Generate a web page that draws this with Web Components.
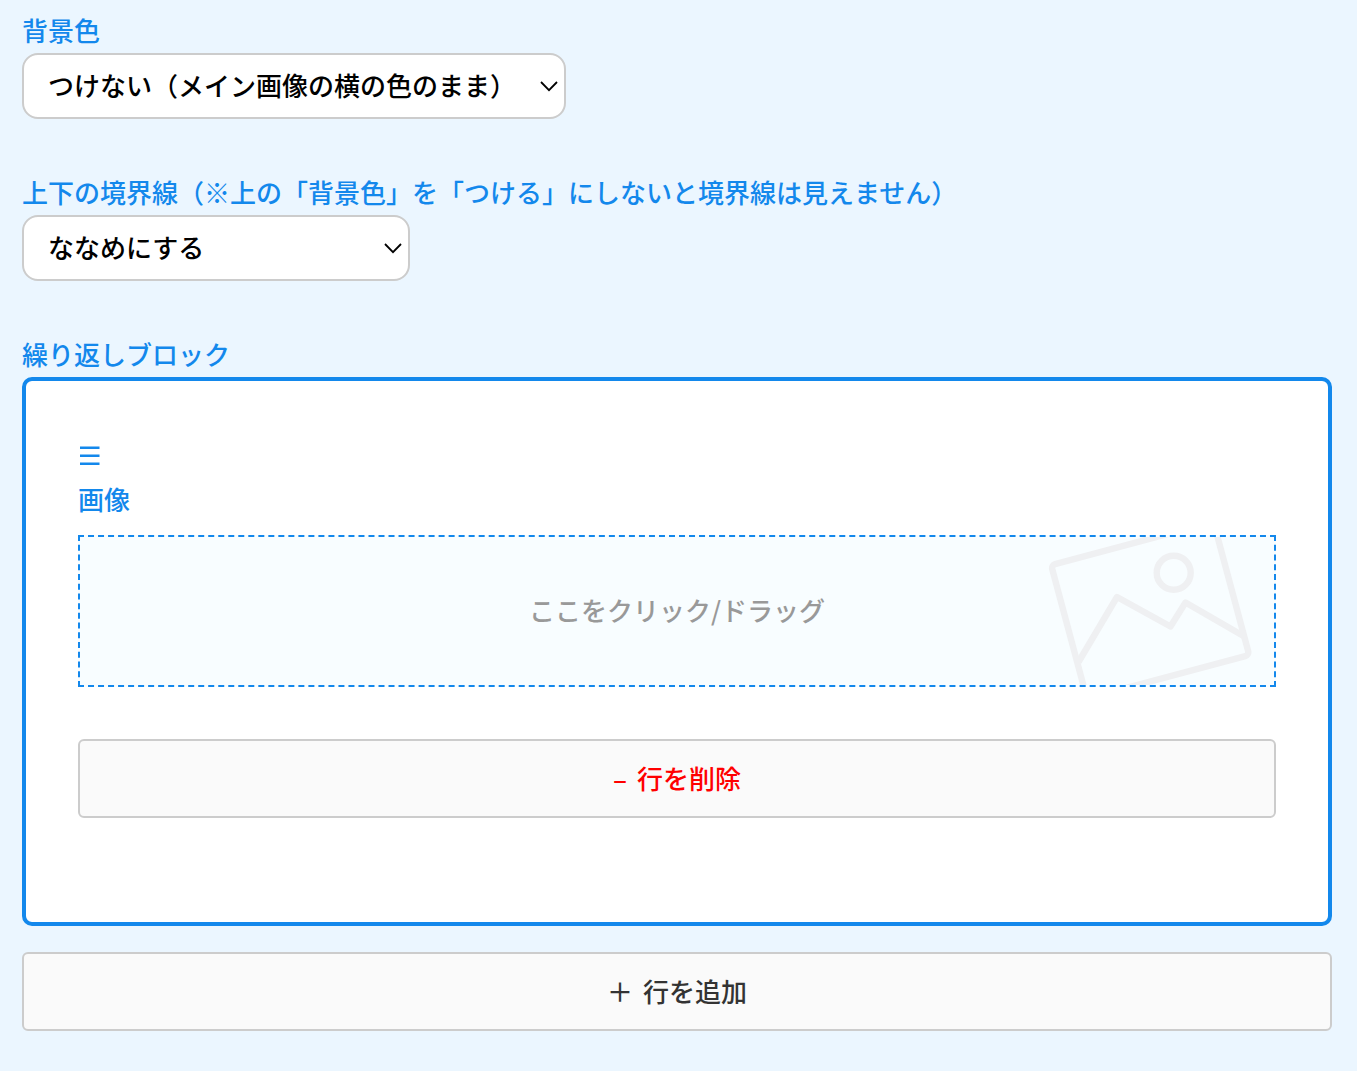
<!DOCTYPE html>
<html lang="ja">
<head>
<meta charset="utf-8">
<title>ブロック設定</title>
<style>
  body {
    margin: 0;
    background: #ebf6ff;
    color: #333;
    font-family: "Noto Sans CJK JP", sans-serif;
    font-size: 26px;
    font-weight: 500;
    line-height: 36px;
    --accent: #1388ec;
    --line: #ccc;
  }
</style>
</head>
<body>
<block-settings>
  <select-field label="背景色">
    <option>つけない（メイン画像の横の色のまま）</option>
  </select-field>
  <select-field label="上下の境界線（※上の「背景色」を「つける」にしないと境界線は見えません）">
    <option>ななめにする</option>
  </select-field>
  <repeat-block label="繰り返しブロック">
    <repeat-row>
      <image-field label="画像">ここをクリック/ドラッグ</image-field>
      <row-button tone="danger"><span slot="sign">–</span>行を削除</row-button>
    </repeat-row>
    <row-button slot="footer"><span slot="sign">＋</span>行を追加</row-button>
  </repeat-block>
</block-settings>

<script>
function define(name, html, setup) {
  const template = document.createElement('template')
  template.innerHTML = html

  customElements.define(name, class extends HTMLElement {
    constructor() {
      super()
      this.attachShadow({ mode: 'open' }).appendChild(template.content.cloneNode(true))
      if (setup) setup(this, this.shadowRoot)
    }
  })
}

define('block-settings', `
  <style>
    :host {
      display: flex;
      flex-direction: column;
      gap: 55px;
      padding: 12px 25px 40px 22px;
    }
  </style>
  <slot></slot>
`)

define('select-field', `
  <style>
    :host {
      display: flex;
      flex-direction: column;
      align-items: flex-start;
      gap: 5px;
    }

    label {
      color: var(--accent);
    }

    .box {
      position: relative;
      max-width: 100%;
    }

    select {
      appearance: none;
      box-sizing: border-box;
      display: block;
      min-width: 388px;
      max-width: 100%;
      height: 66px;
      margin: 0;
      padding: 0 47px 2px 24px;
      border: 2px solid var(--line);
      border-radius: 16px;
      background: #fff;
      color: #000;
      font: inherit;
    }

    svg {
      position: absolute;
      top: 27px;
      right: 7px;
      pointer-events: none;
    }
  </style>
  <label for="control"></label>
  <div class="box">
    <select id="control"></select>
    <svg width="20" height="13" viewBox="0 0 20 13" fill="none" stroke="#000" stroke-width="1.8" aria-hidden="true">
      <path d="M2 2l8 8.200L18 2"/>
    </svg>
  </div>
`, (host, root) => {
  root.querySelector('label').textContent = host.getAttribute('label')
  root.querySelector('select').append(...host.querySelectorAll('option'))
})

define('repeat-block', `
  <style>
    :host {
      display: block;
    }

    .title {
      margin-bottom: 5px;
      color: var(--accent);
    }

    .rows {
      margin-bottom: 26px;
      border: 4px solid var(--accent);
      border-radius: 10px;
      background: #fff;
    }
  </style>
  <div class="title" id="title"></div>
  <div class="rows" role="group" aria-labelledby="title"><slot></slot></div>
  <slot name="footer"></slot>
`, (host, root) => {
  root.querySelector('.title').textContent = host.getAttribute('label')
})

define('repeat-row', `
  <style>
    :host {
      display: block;
      padding: 52px 52px 104px;
    }

    .handle {
      display: flex;
      align-items: center;
      height: 44px;
      margin: 0 0 4px;
      padding: 0;
      border: 0;
      background: none;
      color: var(--accent);
      cursor: move;
    }

    .fields {
      display: flex;
      flex-direction: column;
      gap: 52px;
    }
  </style>
  <button class="handle" type="button">
    <svg width="24" height="22" viewBox="0 0 24 22" stroke="currentColor" stroke-width="2.4" aria-hidden="true">
      <path d="M2 3.700h19.500M2 11.700h19.500M2 19.700h19.500"/>
    </svg>
  </button>
  <div class="fields"><slot></slot></div>
`)

define('image-field', `
  <style>
    :host {
      display: block;
    }

    label {
      display: block;
      margin-bottom: 18px;
      color: var(--accent);
    }

    .zone {
      position: relative;
      display: flex;
      align-items: center;
      justify-content: center;
      box-sizing: border-box;
      min-height: 152px;
      padding-bottom: 2px;
      overflow: hidden;
      border: 2px dashed var(--accent);
      background: #f8fdff;
      color: #999;
    }

    svg {
      position: absolute;
      top: 0;
      right: 0;
    }

    input {
      position: absolute;
      inset: 0;
      width: 100%;
      height: 100%;
      opacity: 0;
      cursor: pointer;
    }
  </style>
  <label for="file"></label>
  <div class="zone">
    <svg width="234" height="148" viewBox="0 0 234 148" fill="none" stroke="#eff0f2" stroke-width="6.4" stroke-linejoin="round" aria-hidden="true">
      <rect width="168" height="138" rx="4" transform="translate(11.2 28.2) rotate(-15)"/>
      <circle cx="133.7" cy="35.8" r="17"/>
      <path d="M38.500 125L77 60l53.500 29.500L145.500 65.500l58 33.500"/>
    </svg>
    <span><slot></slot></span>
    <input id="file" type="file" accept="image/*">
  </div>
`, (host, root) => {
  root.querySelector('label').textContent = host.getAttribute('label')
})

define('row-button', `
  <style>
    :host {
      display: block;
    }

    button {
      display: flex;
      justify-content: center;
      gap: 10px;
      box-sizing: border-box;
      width: 100%;
      margin: 0;
      padding: 19px 20px 21px;
      border: 2px solid var(--line);
      border-radius: 6px;
      background: #fafafa;
      color: #333;
      font: inherit;
      line-height: 35px;
      cursor: pointer;
    }

    :host([tone="danger"]) button {
      color: #f00;
    }
  </style>
  <button type="button"><slot name="sign"></slot><span><slot></slot></span></button>
`)
</script>
</body>
</html>
